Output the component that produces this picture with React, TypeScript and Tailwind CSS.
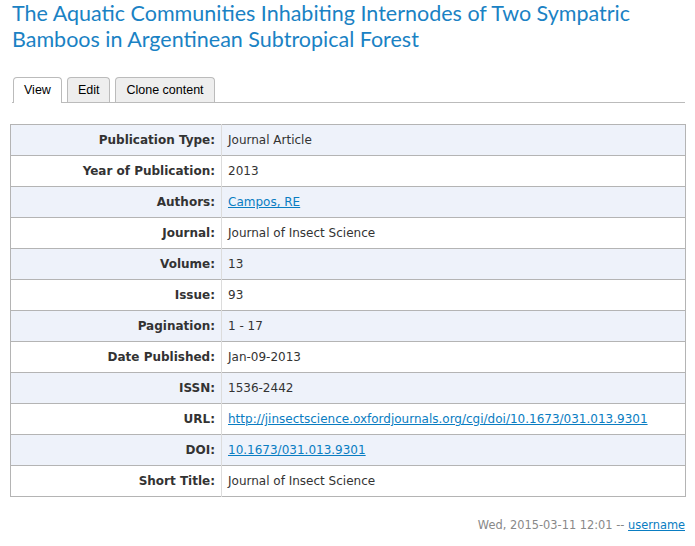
import React from "react";

type Row = { label: string; value: string; link?: boolean };

const rows: Row[] = [
	{ label: "Publication Type:", value: "Journal Article" },
	{ label: "Year of Publication:", value: "2013" },
	{ label: "Authors:", value: "Campos, RE", link: true },
	{ label: "Journal:", value: "Journal of Insect Science" },
	{ label: "Volume:", value: "13" },
	{ label: "Issue:", value: "93" },
	{ label: "Pagination:", value: "1 - 17" },
	{ label: "Date Published:", value: "Jan-09-2013" },
	{ label: "ISSN:", value: "1536-2442" },
	{ label: "URL:", value: "http://jinsectscience.oxfordjournals.org/cgi/doi/10.1673/031.013.9301", link: true },
	{ label: "DOI:", value: "10.1673/031.013.9301", link: true },
	{ label: "Short Title:", value: "Journal of Insect Science" },
];

export default function App() {
	return (
		<div className="w-[695px] h-[546px] bg-white overflow-hidden font-['DejaVu_Sans',sans-serif] text-[#333]">
			<h1 className="pl-3 font-['Lato',sans-serif] text-[21.5px] leading-[26px] text-[#1a82c4]">
				The Aquatic Communities Inhabiting Internodes of Two Sympatric Bamboos in Argentinean Subtropical Forest
			</h1>

			<div className="ml-3 mr-[10px] mt-[25px] flex items-end gap-[5px] pl-[1px] border-b border-[#bbb] font-['Liberation_Sans',sans-serif] text-[12.5px] text-black">
				<div className="-mb-px h-[26px] px-[10px] flex items-center rounded-t-[4px] border border-b-0 border-[#bbb] bg-white">
					View
				</div>
				<div className="h-[25px] px-[10px] flex items-center rounded-t-[4px] border border-b-0 border-[#bbb] bg-[#eee]">
					Edit
				</div>
				<div className="h-[25px] px-[10px] flex items-center rounded-t-[4px] border border-b-0 border-[#bbb] bg-[#eee]">
					Clone content
				</div>
			</div>

			<table className="ml-[10px] mt-[21px] w-[676px] border-collapse border border-[#b4b4b4] text-[12px]">
				<tbody>
					{rows.map((r, i) => (
						<tr key={r.label} className={i % 2 === 0 ? "bg-[#eef2fa] border-b border-[#b4b4b4]" : "bg-white border-b border-[#b4b4b4]"}>
							<td className="w-[211px] h-[31px] pr-[6px] text-right font-bold border-r border-[#dcdcdc]">{r.label}</td>
							<td className="h-[31px] pl-[6px]">
								{r.link ? <a className="text-[#0a7dc2] underline">{r.value}</a> : r.value}
							</td>
						</tr>
					))}
				</tbody>
			</table>

			<div className="mr-[10px] mt-[20px] text-right text-[11.4px] text-[#888]">
				Wed, 2015-03-11 12:01 -- <a className="text-[#0a7dc2] underline">username</a>
			</div>
		</div>
	);
}
